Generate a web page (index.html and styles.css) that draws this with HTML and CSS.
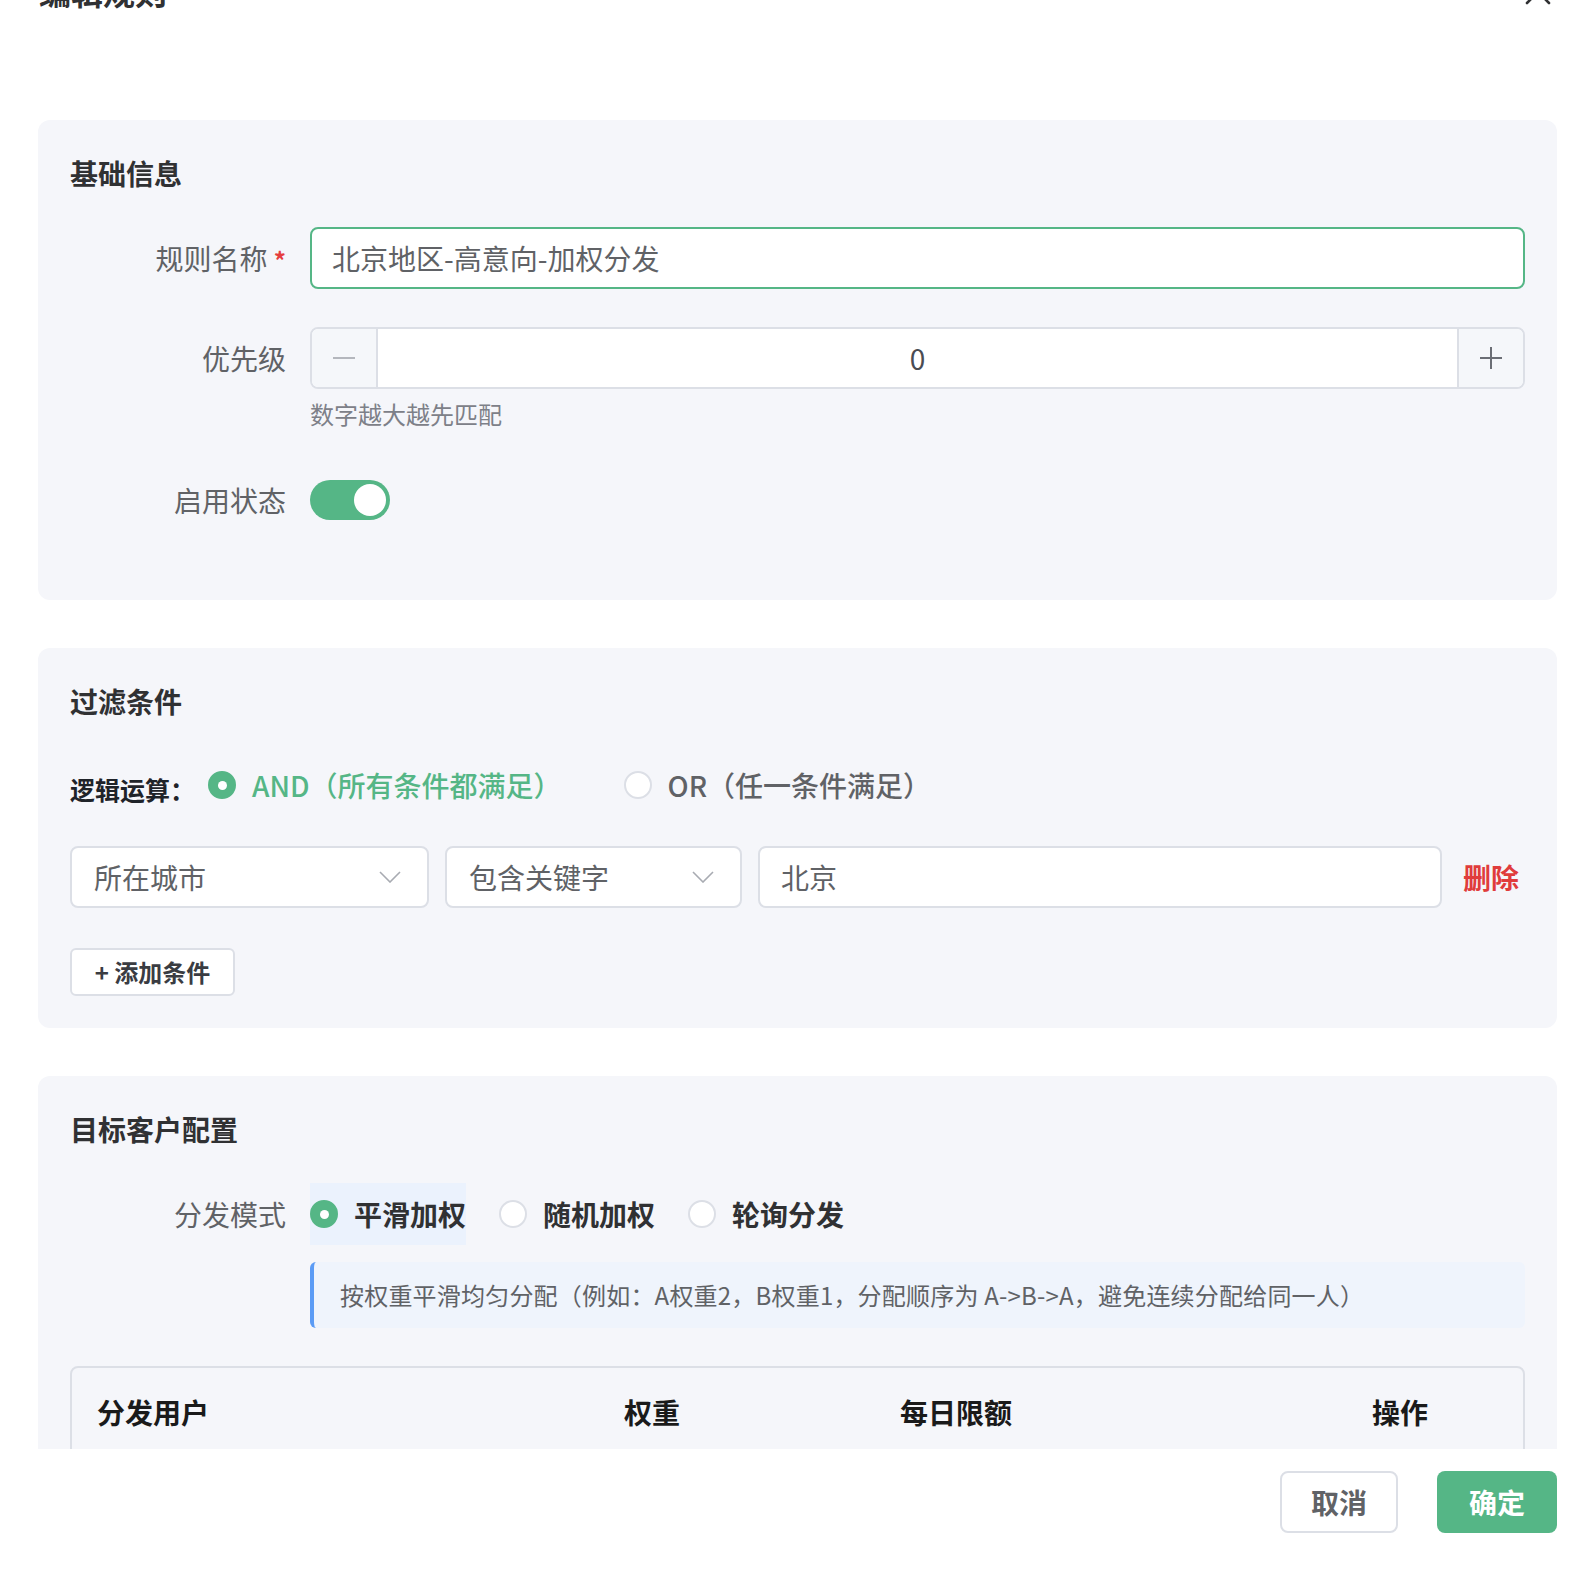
FILE: index.html
```html
<!DOCTYPE html>
<html lang="zh-CN">
<head>
<meta charset="utf-8">
<title>编辑规则</title>
<link rel="stylesheet" href="styles.css">
</head>
<body>
<div class="dialog">
  <header class="dlg-head">
    <span class="dlg-title">编辑规则</span>
    <svg class="dlg-close" width="28" height="28" viewBox="0 0 28 28"><path d="M3 3 L25 25 M25 3 L3 25" stroke="#303133" stroke-width="2.6" stroke-linecap="round" fill="none"/></svg>
  </header>

  <main class="dlg-body">
    <section class="card card-basic">
      <h3 class="card-title">基础信息</h3>

      <div class="form-item item-name">
        <label class="form-label">规则名称 <span class="req">*</span></label>
        <div class="form-control">
          <div class="input is-focus">北京地区-高意向-加权分发</div>
        </div>
      </div>

      <div class="form-item item-priority">
        <label class="form-label">优先级</label>
        <div class="form-control">
          <div class="num-input">
            <span class="num-btn num-minus"><svg width="24" height="24" viewBox="0 0 24 24"><path d="M1 12 H23" stroke="#b4b7bd" stroke-width="2" fill="none"/></svg></span>
            <span class="num-value">0</span>
            <span class="num-btn num-plus"><svg width="24" height="24" viewBox="0 0 24 24"><path d="M1 12 H23 M12 1 V23" stroke="#6b6e75" stroke-width="2" fill="none"/></svg></span>
          </div>
          <div class="hint">数字越大越先匹配</div>
        </div>
      </div>

      <div class="form-item item-status">
        <label class="form-label">启用状态</label>
        <div class="form-control">
          <div class="switch-row"><span class="switch"><span class="switch-knob"></span></span></div>
        </div>
      </div>
    </section>

    <section class="card card-filter">
      <h3 class="card-title">过滤条件</h3>

      <div class="logic-row">
        <span class="logic-label">逻辑运算：</span>
        <label class="radio radio-logic is-checked"><span class="radio-dot"></span><span class="radio-text">AND（所有条件都满足）</span></label>
        <label class="radio radio-logic"><span class="radio-dot"></span><span class="radio-text">OR（任一条件满足）</span></label>
      </div>

      <div class="cond-row">
        <div class="select select-field"><span>所在城市</span><svg width="22" height="12" viewBox="0 0 22 12"><path d="M1 1 L11 11 L21 1" stroke="#a8abb2" stroke-width="1.6" fill="none"/></svg></div>
        <div class="select select-op"><span>包含关键字</span><svg width="22" height="12" viewBox="0 0 22 12"><path d="M1 1 L11 11 L21 1" stroke="#a8abb2" stroke-width="1.6" fill="none"/></svg></div>
        <div class="input cond-value">北京</div>
        <span class="cond-delete">删除</span>
      </div>

      <button class="btn-add">+ 添加条件</button>
    </section>

    <section class="card card-target">
      <h3 class="card-title">目标客户配置</h3>

      <div class="form-item item-mode">
        <label class="form-label">分发模式</label>
        <div class="form-control">
          <div class="radio-group">
            <label class="radio radio-mode is-checked is-hover"><span class="radio-dot"></span><span class="radio-text">平滑加权</span></label>
            <label class="radio radio-mode"><span class="radio-dot"></span><span class="radio-text">随机加权</span></label>
            <label class="radio radio-mode"><span class="radio-dot"></span><span class="radio-text">轮询分发</span></label>
          </div>
          <div class="mode-desc">按权重平滑均匀分配（例如：A权重2，B权重1，分配顺序为 A-&gt;B-&gt;A，避免连续分配给同一人）</div>
        </div>
      </div>

      <div class="user-table">
        <div class="tr th-row">
          <div class="th">分发用户</div>
          <div class="th">权重</div>
          <div class="th">每日限额</div>
          <div class="th">操作</div>
        </div>
        <div class="table-rest"></div>
      </div>
    </section>
  </main>

  <footer class="dlg-foot">
    <button class="btn btn-cancel">取消</button>
    <button class="btn btn-ok">确定</button>
  </footer>
</div>
</body>
</html>
```
FILE: styles.css
```css
html, body {
  margin: 0;
  padding: 0;
  background: #ffffff;
}
body {
  font-family: "Noto Sans CJK SC", "Noto Sans", "Liberation Sans", sans-serif;
  color: #303133;
  overflow: hidden;
}
.dialog {
  width: 1596px;
  height: 1570px;
  background: #fff;
}

/* header */
.dlg-head {
  height: 11px;
  display: flex;
  align-items: flex-end;
  justify-content: space-between;
  padding: 0 44px 0 39px;
}
.dlg-title {
  font-size: 32px;
  line-height: 40px;
  font-weight: 700;
  color: #303133;
}
.dlg-close {
  display: block;
  margin-bottom: 5px;
}

/* body */
.dlg-body {
  height: 1438px;
  box-sizing: border-box;
  padding: 109px 39px 0 38px;
  overflow: hidden;
}
.card {
  background: #f5f6fa;
  border-radius: 12px;
  padding: 32px 32px 32px 32px;
  margin-bottom: 48px;
}
.card-title {
  margin: 0;
  font-size: 28px;
  line-height: 42px;
  font-weight: 700;
  color: #303133;
}

/* form items */
.form-item {
  display: flex;
  align-items: flex-start;
}
.form-label {
  width: 240px;
  flex-shrink: 0;
  box-sizing: border-box;
  padding-right: 24px;
  text-align: right;
  font-size: 28px;
  line-height: 62px;
  color: #606266;
}
.req {
  color: #e53e3e;
  font-size: 24px;
  font-weight: 700;
}
.form-control {
  flex: 1;
  min-width: 0;
}
.card-basic .card-title { margin-bottom: 33px; }
.item-name { margin-bottom: 36px; }
.item-priority { margin-bottom: 37px; }
.item-status { margin-bottom: 37px; }
.card-basic { padding-bottom: 32px; }

.input {
  height: 62px;
  box-sizing: border-box;
  border: 2px solid #dcdfe6;
  border-radius: 8px;
  background: #fff;
  padding: 0 20px;
  font-size: 28px;
  line-height: 58px;
  color: #606266;
  white-space: nowrap;
}
.input.is-focus {
  border-color: #55b686;
}

/* number input */
.num-input {
  display: flex;
  height: 62px;
  box-sizing: border-box;
  border: 2px solid #dcdfe6;
  border-radius: 8px;
  background: #fff;
  overflow: hidden;
}
.num-btn {
  width: 64px;
  flex-shrink: 0;
  background: #f5f7fa;
  display: flex;
  align-items: center;
  justify-content: center;
}
.num-minus { border-right: 2px solid #dcdfe6; }
.num-plus { border-left: 2px solid #dcdfe6; }
.num-value {
  flex: 1;
  text-align: center;
  font-size: 28px;
  line-height: 58px;
  color: #4a4c52;
}
.hint {
  margin-top: 7px;
  font-size: 24px;
  line-height: 36px;
  color: #7d8088;
}

/* switch */
.switch-row {
  height: 62px;
  display: flex;
  align-items: center;
}
.switch {
  width: 80px;
  height: 40px;
  box-sizing: border-box;
  border-radius: 20px;
  background: #55b686;
  display: flex;
  align-items: center;
  justify-content: flex-end;
  padding-right: 4px;
}
.switch-knob {
  width: 32px;
  height: 32px;
  border-radius: 50%;
  background: #fff;
}

/* radios */
.radio {
  display: flex;
  align-items: center;
  gap: 16px;
  cursor: pointer;
}
.radio-dot {
  width: 28px;
  height: 28px;
  box-sizing: border-box;
  border-radius: 50%;
  border: 2px solid #dcdfe6;
  background: #fff;
  display: flex;
  align-items: center;
  justify-content: center;
  flex-shrink: 0;
}
.radio.is-checked .radio-dot {
  background: #55b686;
  border-color: #55b686;
}
.radio.is-checked .radio-dot::after {
  content: "";
  width: 9px;
  height: 9px;
  border-radius: 50%;
  background: #fff;
}
.radio-text {
  font-size: 28px;
  line-height: 40px;
  white-space: nowrap;
}

/* filter */
.card-filter .card-title { margin-bottom: 39px; }
.logic-row {
  display: flex;
  align-items: center;
  height: 48px;
  margin-bottom: 37px;
}
.logic-label {
  width: 138px;
  flex-shrink: 0;
  font-size: 25px;
  font-weight: 700;
  color: #1f2329;
  padding-top: 8px;
}
.radio-logic .radio-text {
  color: #606266;
  font-weight: 500;
}
.radio-logic.is-checked .radio-text {
  color: #55b686;
}
.radio-logic.is-checked {
  margin-right: 62px;
}
.cond-row {
  display: flex;
  align-items: center;
  gap: 16px;
  margin-bottom: 40px;
}
.select {
  height: 62px;
  box-sizing: border-box;
  border: 2px solid #dcdfe6;
  border-radius: 8px;
  background: #fff;
  display: flex;
  align-items: center;
  justify-content: space-between;
  padding: 0 26px 0 22px;
  font-size: 28px;
  color: #606266;
  flex-shrink: 0;
}
.select-field { width: 359px; }
.select-op { width: 297px; }
.cond-value {
  flex: 1;
  padding-left: 21px;
}
.cond-delete {
  margin-left: 5px;
  padding-right: 6px;
  font-size: 28px;
  font-weight: 700;
  color: #e03c3c;
  line-height: 40px;
}
.btn-add {
  display: block;
  width: 165px;
  height: 48px;
  box-sizing: border-box;
  border: 2px solid #dcdfe6;
  border-radius: 6px;
  background: #fff;
  font-family: inherit;
  font-size: 24px;
  font-weight: 700;
  color: #3a3c42;
  padding: 0;
  line-height: 44px;
}

/* target */
.card-target .card-title { margin-bottom: 33px; }
.radio-group {
  display: flex;
  align-items: center;
  height: 62px;
}
.radio-mode {
  height: 62px;
  margin-right: 33px;
}
.radio-mode.is-hover {
  background: #ebf2fd;
}
.radio-mode .radio-text {
  font-weight: 700;
  color: #303133;
}
.mode-desc {
  margin-top: 17px;
  height: 66px;
  box-sizing: border-box;
  background: #eff4fc;
  border-left: 4px solid #5b9bf5;
  border-radius: 6px;
  padding-left: 26px;
  font-size: 24px;
  line-height: 66px;
  color: #606266;
  white-space: nowrap;
  letter-spacing: 0.2px;
}
.user-table {
  margin-top: 38px;
  border: 2px solid #dcdfe6;
  border-radius: 8px;
  background: #f5f6fa;
}
.tr {
  display: grid;
  grid-template-columns: 527px 276px 472px 1fr;
}
.th {
  padding-left: 25px;
  font-size: 28px;
  line-height: 88px;
  font-weight: 700;
  color: #1a1a1a;
}
.table-rest {
  height: 120px;
  border-top: 2px solid #e4e7ed;
  background: #fff;
}

/* footer */
.dlg-foot {
  display: flex;
  justify-content: flex-end;
  gap: 39px;
  padding: 22px 39px 0 0;
}
.btn {
  height: 62px;
  box-sizing: border-box;
  border-radius: 8px;
  font-family: inherit;
  font-size: 28px;
  font-weight: 700;
  padding: 0;
}
.btn-cancel {
  width: 118px;
  border: 2px solid #dcdfe6;
  background: #fff;
  color: #606266;
}
.btn-ok {
  width: 120px;
  border: none;
  background: #55b686;
  color: #fff;
}
```
